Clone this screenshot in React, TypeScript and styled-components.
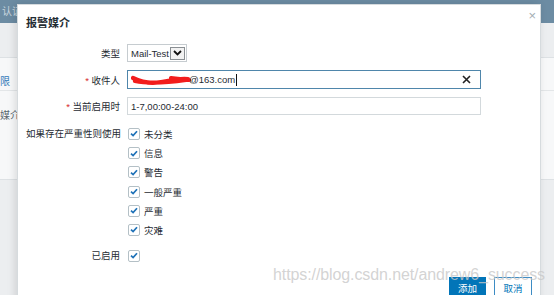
import React from 'react'
import styled, { createGlobalStyle } from 'styled-components'

const GlobalStyle = createGlobalStyle`
  html, body {
    margin: 0;
    padding: 0;
    overflow: hidden;
  }
  body {
    font-family: "Liberation Sans", "Noto Sans CJK SC", sans-serif;
    color: #1f2c33;
  }
`

const severities = ['未分类', '信息', '警告', '一般严重', '严重', '灾难']

export default function App() {
  return (
    <>
      <GlobalStyle />
      <Page>
        <TopBar>
          <TopBarText>认证</TopBarText>
        </TopBar>
        <Panel>
          <PanelRow $height={32}>
            <PanelLink>限</PanelLink>
          </PanelRow>
          <PanelRow $height={88}>
            <PanelText>媒介</PanelText>
          </PanelRow>
        </Panel>

        <Dialog>
          <Title>报警媒介</Title>
          <CloseButton>×</CloseButton>
          <Form>
            <FormRow $mt={0}>
              <Label>类型</Label>
              <Select>
                <span>Mail-Test</span>
                <SelectArrow>
                  <svg width="9" height="6" viewBox="0 0 9 6">
                    <path d="M1 1 L4.5 4.5 L8 1" fill="none" stroke="#111" strokeWidth="1.8" />
                  </svg>
                </SelectArrow>
              </Select>
            </FormRow>
            <FormRow $mt={8}>
              <Label><Req>*</Req> 收件人</Label>
              <Input $focused $height={19}>
                <Scribble width="60" height="13" viewBox="0 0 60 13">
                  <path
                    d="M2 5 C10 9 20 11 30 9 C38 8 46 5 57 6 M4 8 C18 11 34 10 55 7 M40 5 L58 7"
                    fill="none"
                    stroke="#f21d1d"
                    strokeWidth="4.2"
                    strokeLinecap="round"
                  />
                </Scribble>
                <InputText>@163.com</InputText>
                <Caret />
                <ClearIcon>
                  <svg width="9" height="9" viewBox="0 0 9 9">
                    <path d="M1 1 L8 8 M8 1 L1 8" stroke="#222" strokeWidth="1.6" />
                  </svg>
                </ClearIcon>
              </Input>
            </FormRow>
            <FormRow $mt={8}>
              <Label><Req>*</Req> 当前启用时</Label>
              <Input $height={18}>
                <InputText>1-7,00:00-24:00</InputText>
              </Input>
            </FormRow>
            <FormRow $mt={9.4}>
              <Label $top>如果存在严重性则使用</Label>
              <CheckList>
                {severities.map(s => (
                  <CheckItem key={s}>
                    <Checkbox />
                    <span>{s}</span>
                  </CheckItem>
                ))}
              </CheckList>
            </FormRow>
            <FormRow $mt={6.8}>
              <Label $top>已启用</Label>
              <CheckItem>
                <Checkbox />
              </CheckItem>
            </FormRow>
          </Form>
          <Footer>
            <PrimaryButton>添加</PrimaryButton>
            <SecondaryButton>取消</SecondaryButton>
          </Footer>
        </Dialog>

        <Watermark>https://blog.csdn.net/andrew6_success</Watermark>
      </Page>
    </>
  )
}

function Checkbox() {
  return (
    <Box>
      <svg width="8" height="7" viewBox="0 0 8 7">
        <path d="M1 3.6 L3.1 5.6 L7 1.2" fill="none" stroke="#1f72b8" strokeWidth="1.7" />
      </svg>
    </Box>
  )
}

const Page = styled.div`
  position: relative;
  width: 554px;
  height: 295px;
  overflow: hidden;
  background: #eceef0;
`

const TopBar = styled.div`
  height: 23px;
  background: #6c8ca3;
  display: flex;
  align-items: center;
  padding-left: 2px;
`

const TopBarText = styled.span`
  color: #c9d6df;
  font-size: 10px;
  margin-top: -2px;
`

const Panel = styled.div`
  margin-top: 34px;
  background: #f7f8f9;
  border-top: 1px solid #dde1e4;
  border-bottom: 1px solid #dde1e4;
`

const PanelRow = styled.div<{ $height: number }>`
  height: ${p => p.$height}px;
  border-bottom: 1px solid #e3e6e8;
  display: flex;
  align-items: flex-start;
  &:last-child {
    border-bottom: none;
  }
`

const PanelLink = styled.span`
  font-size: 10px;
  color: #2f78b8;
  margin-top: 15px;
  margin-left: 0;
`

const PanelText = styled.span`
  font-size: 10px;
  color: #58656d;
  margin-top: 16px;
  margin-left: 0;
`

const Dialog = styled.div`
  position: absolute;
  left: 17px;
  top: 4px;
  width: 524px;
  height: 310px;
  background: #fff;
  border: 1px solid #d6dbde;
  box-shadow: -2px 0 8px rgba(0, 0, 0, 0.12);
  box-sizing: border-box;
  display: flex;
  flex-direction: column;
  padding: 11px 8px 0 8px;
`

const Title = styled.div`
  font-size: 11px;
  font-weight: bold;
  line-height: 14px;
  color: #1f2c33;
`

const CloseButton = styled.span`
  position: absolute;
  right: 4px;
  top: 3px;
  font-size: 13px;
  color: #a3adb3;
`

const Form = styled.div`
  display: flex;
  flex-direction: column;
  margin-top: 14px;
`

const FormRow = styled.div<{ $mt: number }>`
  display: grid;
  grid-template-columns: 94px 354px;
  column-gap: 7px;
  align-items: center;
  margin-top: ${p => p.$mt}px;
`

const Label = styled.div<{ $top?: boolean }>`
  font-size: 9.5px;
  text-align: right;
  color: #1f2c33;
  white-space: nowrap;
  align-self: ${p => (p.$top ? 'start' : 'center')};
  line-height: ${p => (p.$top ? '19.2px' : 'normal')};
`

const Req = styled.span`
  color: #d72a2a;
`

const Select = styled.div`
  width: 60px;
  height: 18px;
  box-sizing: border-box;
  border: 1px solid #c6ccd0;
  display: flex;
  align-items: center;
  justify-content: space-between;
  padding: 0 1px 0 3px;
  font-size: 9.5px;
  color: #1f2c33;
  overflow: hidden;
`

const SelectArrow = styled.span`
  width: 15px;
  height: 13px;
  box-sizing: border-box;
  border: 1px solid #8a8f93;
  background: #f2f2f2;
  display: flex;
  align-items: center;
  justify-content: center;
`

const Input = styled.div<{ $focused?: boolean; $height: number }>`
  position: relative;
  height: ${p => p.$height}px;
  box-sizing: border-box;
  border: 1px solid ${p => (p.$focused ? '#4f86ab' : '#d3d9dc')};
  display: flex;
  align-items: center;
  padding-left: 3px;
  background: #fff;
`

const Scribble = styled.svg`
  margin-right: -2px;
`

const InputText = styled.span`
  font-size: 9.5px;
  color: #1f2c33;
`

const Caret = styled.span`
  width: 1px;
  height: 12px;
  background: #111;
  margin-left: 1px;
`

const ClearIcon = styled.span`
  position: absolute;
  right: 9px;
  top: 4px;
  display: flex;
`

const CheckList = styled.div`
  display: flex;
  flex-direction: column;
`

const CheckItem = styled.div`
  height: 19.2px;
  display: flex;
  align-items: center;
  gap: 4px;
  font-size: 9.5px;
  color: #1f2c33;
  padding-left: 1px;
`

const Box = styled.span`
  width: 12px;
  height: 12px;
  box-sizing: border-box;
  border: 1px solid #b4c0c6;
  border-radius: 2px;
  display: flex;
  align-items: center;
  justify-content: center;
  background: #fff;
`

const Footer = styled.div`
  display: flex;
  justify-content: flex-end;
  gap: 8px;
  margin-top: 11.4px;
`

const PrimaryButton = styled.div`
  width: 37px;
  height: 20px;
  box-sizing: border-box;
  background: #0275b8;
  color: #fff;
  font-size: 9.5px;
  display: flex;
  align-items: center;
  justify-content: center;
  padding-top: 2px;
`

const SecondaryButton = styled.div`
  width: 38px;
  height: 20px;
  box-sizing: border-box;
  border: 1px solid #3d8cc4;
  color: #0275b8;
  background: #fff;
  font-size: 9.5px;
  display: flex;
  align-items: center;
  justify-content: center;
  padding-top: 2px;
`

const Watermark = styled.div`
  position: absolute;
  left: 273px;
  top: 266px;
  font-size: 16px;
  letter-spacing: -0.1px;
  color: rgba(200, 200, 200, 0.8);
  white-space: nowrap;
  pointer-events: none;
`
